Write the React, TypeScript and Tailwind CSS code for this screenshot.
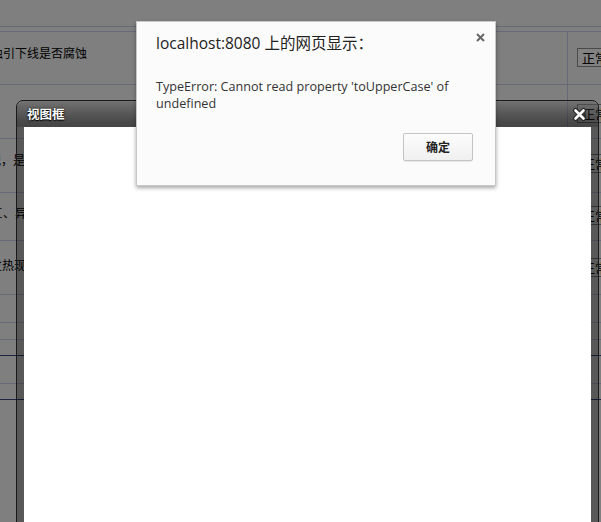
import React from 'react';

const cjk = { fontFamily: '"Noto Sans CJK SC", "Liberation Sans", sans-serif' };
const ui = { fontFamily: '"Open Sans", "Noto Sans CJK SC", sans-serif' };

type Row = { h: string; line: string; text?: string; textCls?: string; sel?: string };

// rows of the table under the overlay, top to bottom
const rows: Row[] = [
  { h: 'h-[27px]', line: 'border-[#676b79]' },
  { h: 'h-[5px]', line: 'border-[#676b79]' },
  { h: 'h-[53px]', line: 'border-[#676b79]', text: '蚀引下线是否腐蚀', textCls: 'pt-[12px] -ml-[9px]', sel: 'pt-[16px]' },
  { h: 'h-[54px]', line: 'border-[#676b79]', text: '', sel: 'pt-[19px]' },
  { h: 'h-[54px]', line: 'border-[#676b79]', text: '况，是否有破损', textCls: 'pt-[12px] -ml-[11px]', sel: 'pt-[15px]' },
  { h: 'h-[48px]', line: 'border-[#676b79]', text: '匚、异常声响', textCls: 'pt-[11px] -ml-[9px]', sel: 'pt-[13px]' },
  { h: 'h-[54px]', line: 'border-[#676b79]', text: '发热现象', textCls: 'pt-[15px] -ml-[10px]', sel: 'pt-[17px]' },
  { h: 'h-[28px]', line: 'border-[#676b79]' },
  { h: 'h-[17px]', line: 'border-[#676b79]' },
  { h: 'h-[16px]', line: 'border-[#1d2745]' },
  { h: 'h-[28px]', line: 'border-[#676b79]' },
  { h: 'h-[16px]', line: 'border-[#1d2745]' },
];

function TableBehind() {
  return (
    <div className="flex flex-col" style={cjk}>
      {rows.map((r, i) => (
        <div key={i} className={`flex ${r.h} border-b ${r.line}`}>
          <div className="w-[567px] shrink-0 overflow-hidden">
            {r.text ? (
              <div className={`text-[12px] leading-[18px] text-black whitespace-nowrap ${r.textCls}`}>{r.text}</div>
            ) : null}
          </div>
          <div className={`w-[34px] shrink-0 pl-[9px] ${i < 2 ? '' : 'border-l border-[#676b79]'}`}>
            {r.sel ? (
              <div className={r.sel}>
                <div className="h-[19px] w-[40px] border border-[#4a4a4a] bg-[#828282] pl-[4px] text-[13px] leading-[17px] text-black whitespace-nowrap">
                  正常
                </div>
              </div>
            ) : null}
          </div>
        </div>
      ))}
    </div>
  );
}

function ViewWindow() {
  return (
    <div className="absolute left-[16px] top-[100px] w-[583px] h-[440px] rounded-t-[7px] border border-[#1a1a1a] bg-black/30 flex flex-col">
      <div className="h-[26px] flex items-center pl-[10px] rounded-t-[6px] bg-linear-to-b from-white/15 to-black/20 border-t border-white/25">
        <span
          className="text-[12.5px] font-bold text-white leading-none"
          style={{ ...cjk, textShadow: '0 1px 1px #000, 0 0 2px #000' }}
        >
          视图框
        </span>
        <svg className="ml-auto mr-[11px]" width="15" height="15" viewBox="0 0 15 15">
          <path d="M3.5 3.5 L11.5 11.5 M11.5 3.5 L3.5 11.5" stroke="#2a2a2a" strokeWidth="5" strokeLinecap="round" />
          <path d="M3.5 3.5 L11.5 11.5 M11.5 3.5 L3.5 11.5" stroke="#fff" strokeWidth="2.6" strokeLinecap="round" />
        </svg>
      </div>
      <div className="flex-1 ml-[7px] mr-[7px] bg-white" />
    </div>
  );
}

function AlertBox() {
  return (
    <div
      className="absolute left-[136px] top-[21px] w-[360px] h-[165px] bg-[#fbfbfb] border border-[#c8c8c8] shadow-[0_2px_4px_rgba(0,0,0,0.35)] px-[19px] pt-[11px]"
      style={ui}
    >
      <svg className="absolute right-[10px] top-[11px]" width="9" height="9" viewBox="0 0 9 9">
        <path d="M1 1 L8 8 M8 1 L1 8" stroke="#666" strokeWidth="2" />
      </svg>
      <div className="text-[15.5px] leading-[20px] text-[#222] whitespace-nowrap">localhost:8080 上的网页显示：</div>
      <div className="mt-[25px] text-[12.6px] leading-[17px] text-[#333]">
        TypeError: Cannot read property 'toUpperCase' of
        <br />
        undefined
      </div>
      <div className="flex justify-end mt-[21px] pr-[3px]">
        <button
          className="w-[70px] h-[28px] rounded-[2px] border border-[#c4c4c4] bg-linear-to-b from-[#fdfdfd] to-[#f0f0f0] text-[12px] font-bold text-[#222] shadow-[0_1px_1px_rgba(0,0,0,0.08)]"
          style={cjk}
        >
          确定
        </button>
      </div>
    </div>
  );
}

export default function App() {
  return (
    <div className="relative w-[601px] h-[522px] overflow-hidden bg-[#7f7f7f]">
      <TableBehind />
      <ViewWindow />
      <AlertBox />
    </div>
  );
}
